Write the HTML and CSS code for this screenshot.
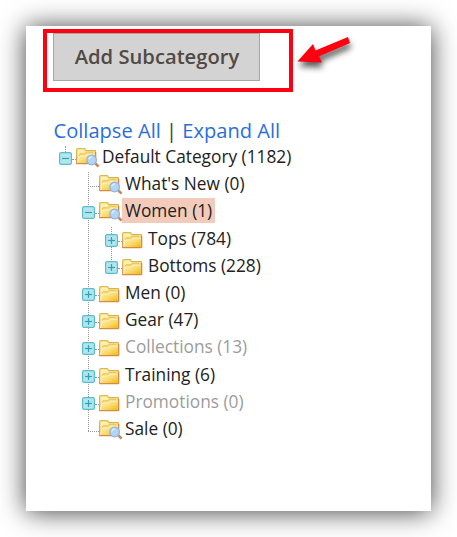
FILE: index.html
```
<!DOCTYPE html>
<html lang="en">
<head>
<meta charset="utf-8">
<title>Categories</title>
<link rel="stylesheet" href="styles.css">
</head>
<body>
<svg class="defs" width="0" height="0" aria-hidden="true">
  <defs>
    <linearGradient id="gold" x1="0" y1="0" x2="1" y2="1"><stop offset="0" stop-color="#fff2b0"/><stop offset=".55" stop-color="#f8d96a"/><stop offset="1" stop-color="#ebb800"/></linearGradient>
    <linearGradient id="edge" x1="0" y1="0" x2="0" y2="1"><stop offset="0" stop-color="#d9bd4a"/><stop offset="1" stop-color="#d58a45"/></linearGradient>
    <symbol id="folder" viewBox="0 0 24 20">
      <path d="M.7 15.5V1.7q0-1 1-1h6.7l1.4 2h9.5v12.8z" fill="#fff0b0" stroke="url(#edge)" stroke-width="1.2"/>
      <path d="M2.8 8.3 4 5.7h4.5l1.8-1.5H17v3" fill="#f6d978" stroke="#e3b94e" stroke-width=".8"/>
      <path d="M1.3 15.5 3.2 8h6.2L11 6.2h8.2v9.3z" fill="url(#gold)" stroke="#fff6d0" stroke-width=".8"/>
      <path d="M.5 15.6h19.2M19.6 4v11.6" fill="none" stroke="#d58a45" stroke-width="1.4"/>
    </symbol>
    <symbol id="search" viewBox="0 0 24 20">
      <use href="#folder" width="24" height="20"/>
      <path d="m19.6 15.8 3 2.8" stroke="#bf8960" stroke-width="2.6"/>
      <circle cx="15.6" cy="12" r="4.8" fill="#b5d4f5" stroke="#8fb5e0" stroke-width="1.2"/>
      <path d="M12.8 11.2q.8-2.4 3-2.4" fill="none" stroke="#e4f2ff" stroke-width="1.3"/>
    </symbol>
    <symbol id="minus" viewBox="0 0 13 13"><rect x=".6" y=".6" width="11.8" height="11.8" rx="1.6" fill="#b5e5ec" stroke="#58bdcd" stroke-width="1.2"/><path d="M3 6.5h7" stroke="#2ba5b9" stroke-width="1.2"/></symbol>
    <symbol id="plus" viewBox="0 0 13 13"><use href="#minus" width="13" height="13"/><path d="M6.5 3v7" stroke="#2ba5b9" stroke-width="1.2"/></symbol>
  </defs>
</svg>
<main class="panel">
  <div class="callout"><button class="add">Add Subcategory</button>
    <svg class="arrow" width="62" height="40" viewBox="0 0 62 40"><path d="M1.500 29.500 17 12l2.500 6.500L52 5l2 6-31 13.500 3 6z" fill="#ff0010"/></svg>
  </div>
  <nav class="links"><a>Collapse All</a> <span>|</span> <a>Expand All</a></nav>
  <ul class="tree">
    <li class="row root"><svg class="toggle"><use href="#minus"/></svg><svg class="icon"><use href="#search"/></svg><span class="name">Default Category (1182)</span></li>
    <li><ul class="branch">
      <li class="row leaf"><i class="toggle"></i><svg class="icon"><use href="#search"/></svg><span class="name">What's New (0)</span></li>
      <li class="row"><svg class="toggle"><use href="#minus"/></svg><svg class="icon"><use href="#search"/></svg><span class="name selected">Women (1)</span></li>
      <li><ul class="branch nested">
        <li class="row"><svg class="toggle"><use href="#plus"/></svg><svg class="icon folder"><use href="#folder"/></svg><span class="name">Tops (784)</span></li>
        <li class="row"><svg class="toggle"><use href="#plus"/></svg><svg class="icon folder"><use href="#folder"/></svg><span class="name">Bottoms (228)</span></li>
      </ul></li>
      <li class="row"><svg class="toggle"><use href="#plus"/></svg><svg class="icon folder"><use href="#folder"/></svg><span class="name">Men (0)</span></li>
      <li class="row"><svg class="toggle"><use href="#plus"/></svg><svg class="icon folder"><use href="#folder"/></svg><span class="name">Gear (47)</span></li>
      <li class="row"><svg class="toggle"><use href="#plus"/></svg><svg class="icon folder"><use href="#folder"/></svg><span class="name off">Collections (13)</span></li>
      <li class="row"><svg class="toggle"><use href="#plus"/></svg><svg class="icon folder"><use href="#folder"/></svg><span class="name">Training (6)</span></li>
      <li class="row"><svg class="toggle"><use href="#plus"/></svg><svg class="icon folder"><use href="#folder"/></svg><span class="name off">Promotions (0)</span></li>
      <li class="row leaf"><i class="toggle"></i><svg class="icon"><use href="#search"/></svg><span class="name">Sale (0)</span></li>
    </ul></li>
  </ul>
</main>
</body>
</html>
```
FILE: styles.css
```
* { box-sizing: border-box; }
body { margin: 0; padding: 26px; background: #fff; font-family: "Open Sans", sans-serif; overflow: hidden; }
.defs { position: absolute; }
.panel { width: 405px; height: 485px; padding: 3px 0 0 17px; background: #fff; box-shadow: 0 1px 25px rgba(0, 0, 0, .75); }
.callout { position: relative; width: 250px; height: 63px; padding: 0 0 0 6px; border: 4px solid #ff0010; }
.add { display: block; width: 207px; height: 48px; padding: 0 0 2px 1px; border: 1px solid #a6a6a6; background: #d3d3d3; color: #514943; font: 600 20.2px "Open Sans", sans-serif; white-space: nowrap; }
.arrow { position: absolute; left: 249px; top: -1px; filter: drop-shadow(1px 5px 3px rgba(0, 0, 0, .65)); }
.links { height: 28px; margin: 25px 0 0 10.5px; font-size: 20.1px; line-height: 28px; color: #41362f; white-space: nowrap; }
.links a { color: #2a6edb; }
ul { list-style: none; margin: 0; padding: 0; }
.tree { margin: -2px 0 0 16px; font-size: 17.3px; color: #222; }
.branch { position: relative; padding-left: 23px; }
.branch::before { content: ""; position: absolute; left: 29px; top: 2px; bottom: 11px; border-left: 1px dotted #999; }
.row { position: relative; display: flex; align-items: center; height: 27.2px; white-space: nowrap; }
.root::before { content: ""; position: absolute; left: 6px; top: 3px; height: 6px; border-left: 1px dotted #999; }
.row::after { content: ""; position: absolute; left: 13px; top: 16px; width: 4px; border-top: 1px dotted #999; }
.leaf::after { left: 6px; width: 11px; }
.toggle { position: relative; flex: none; width: 13px; height: 13px; margin-top: 4px; }
.icon { position: relative; z-index: 1; flex: none; width: 24px; height: 20px; margin: 3px 0 0 4px; }
.folder { margin-top: 7px; }
.name { height: 25px; line-height: 25px; margin-left: -1px; padding: 0 3px; }
.selected { background: #f3cbba; }
.off { color: #9c9c9c; }
```
